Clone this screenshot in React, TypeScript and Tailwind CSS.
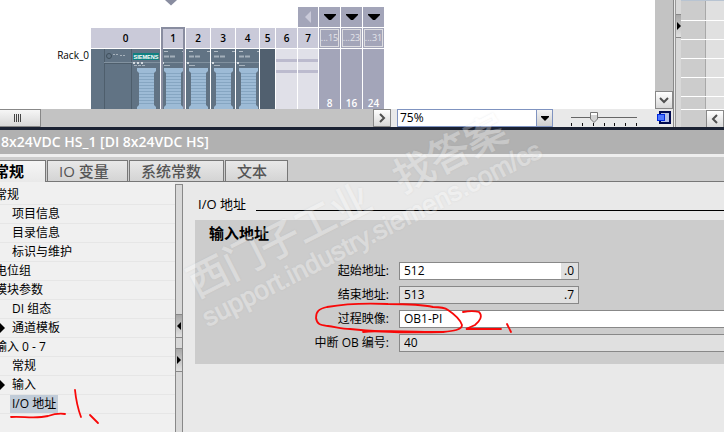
import type { ReactNode } from "react";
import clsx from "clsx";

const treeItems = [
  { label: "常规", level: 0 },
  { label: "项目信息", level: 1 },
  { label: "目录信息", level: 1 },
  { label: "标识与维护", level: 1 },
  { label: "电位组", level: 0 },
  { label: "模块参数", level: 0 },
  { label: "DI 组态", level: 1 },
  { label: "通道模板", level: 1, expandable: true },
  { label: "输入 0 - 7", level: 0 },
  { label: "常规", level: 1 },
  { label: "输入", level: 1, expandable: true },
  { label: "I/O 地址", level: 1, selected: true },
];

const tabs = [
  { label: "IO 变量", width: "w-[81px]" },
  { label: "系统常数", width: "w-[95px]" },
  { label: "文本", width: "w-[63px]" },
];

const moreSlots = [
  { range: "...15", last: "8" },
  { range: "...23", last: "16" },
  { range: "...31", last: "24" },
];

function Connector({ x }: { x: number }) {
  const stripes = [24, 27, 30, 33, 36, 39, 42, 45, 48, 51, 54];
  return (
    <g transform={`translate(${x} 0)`}>
      <path d="M0 19H19V22L17 24V56L19 58V60H0V58L2 56V24L0 22Z" fill="#9dbbd6" />
      {stripes.map((y) => (
        <rect key={y} x="2" y={y} width="15" height="1" fill="#86a6c2" />
      ))}
    </g>
  );
}

function CpuDrawing() {
  return (
    <svg viewBox="0 0 69 60" className="block h-[60px] w-[69px] bg-[#617384]" aria-hidden="true">
      <path d="M13.5 0V60M40.5 0V60" stroke="#4e5e6c" />
      <path d="M13 13.5H69" stroke="#8292a0" />
      <path d="M13 14.5H40" stroke="#4e5e6c" />
      <circle cx="18" cy="7" r="2.5" fill="none" stroke="#3f4f5c" />
      <path d="M22 5.5H28M29 6.5H35" stroke="#a7b2bc" strokeDasharray="2 1" />
      <rect x="42" y="4" width="26" height="7" fill="#118080" />
      <text x="55" y="10" fontSize="5.6" fontWeight="700" fill="#fff" textAnchor="middle" fontFamily="Liberation Sans, sans-serif">
        SIEMENS
      </text>
      <path d="M42 13h2v2h-2zM46 13h2v2h-2zM50 13h2v2h-2z" fill="#d5dbe0" />
      <path d="M43 16.500H54" stroke="#a7b2bc" strokeDasharray="3 1" />
      <Connector x={46} />
    </svg>
  );
}

function ModuleDrawing() {
  return (
    <svg viewBox="0 0 24 60" preserveAspectRatio="xMinYMin slice" className="block h-[60px] w-full bg-[#617384]" aria-hidden="true">
      <path d="M3 2.500H7M21 2.500H24" stroke="#b3bdc6" />
      <path d="M3 7.500H14" stroke="#a3afba" strokeWidth="2" strokeDasharray="5 1" />
      <path d="M0 13.500H24" stroke="#8292a0" />
      <rect x="1" y="13" width="2" height="2" fill="#d5dbe0" />
      <path d="M3 16.500H9" stroke="#a7b2bc" />
      <Connector x={3} />
    </svg>
  );
}

function Slot({ label, width, selected, children }: { label: string; width: string; selected?: boolean; children: ReactNode }) {
  return (
    <div className={clsx("relative shrink-0 pt-[21px]", width)}>
      <div className="flex h-5 items-center justify-center bg-[#cacad9] text-[10px] font-semibold">{label}</div>
      <div className="mt-px h-[60px]">{children}</div>
      {selected && <div className="absolute inset-x-0 top-5 bottom-0 border-2 border-b-0 border-[#898da0]" />}
    </div>
  );
}

function EmptyRail() {
  return (
    <div className="h-full bg-[#e0e0e8] pt-[10px]">
      <div className="h-[3px] bg-[#bcbbce]" />
      <div className="mt-2 h-[3px] bg-[#bcbbce]" />
    </div>
  );
}

function RackView() {
  return (
    <div className="relative flex h-[109px] overflow-hidden bg-white pt-[7px]">
      <svg viewBox="0 0 12 6" className="absolute top-0 left-[165px] h-[6px] w-3" aria-hidden="true">
        <path d="M0 0H12L6 5.500Z" fill="#898da0" />
      </svg>
      <div className="w-[91px] shrink-0 pt-[40px] pr-[2px] text-right text-[10px] leading-4">Rack_0</div>
      <div className="flex gap-px">
        <Slot label="0" width="w-[69px]">
          <CpuDrawing />
        </Slot>
        <Slot label="1" width="w-6" selected>
          <ModuleDrawing />
        </Slot>
        <Slot label="2" width="w-6">
          <ModuleDrawing />
        </Slot>
        <Slot label="3" width="w-6">
          <ModuleDrawing />
        </Slot>
        <Slot label="4" width="w-[23px]">
          <ModuleDrawing />
        </Slot>
        <Slot label="5" width="w-[15px]">
          <div className="h-full bg-[#51606f]" />
        </Slot>
        <Slot label="6" width="w-[21px]">
          <EmptyRail />
        </Slot>
        <div className="relative">
          <Slot label="7" width="w-5">
            <EmptyRail />
          </Slot>
          <button type="button" aria-label="收起" className="absolute inset-x-0 top-0 flex h-5 items-center justify-center bg-[#a3a5b9]">
            <svg viewBox="0 0 6 12" className="h-3 w-[6px]" aria-hidden="true">
              <path d="M6 0V12L0 6Z" fill="#cacad9" />
            </svg>
          </button>
        </div>
        {moreSlots.map((slot) => (
          <div key={slot.last} className="flex w-[21px] flex-col gap-px">
            <button type="button" aria-label={slot.range} className="flex h-5 items-center justify-center bg-[#a3a5b9]">
              <svg viewBox="0 0 12 6" className="h-[6px] w-3" aria-hidden="true">
                <path d="M0 0H12V1L7 6H5L0 1Z" />
              </svg>
            </button>
            <div className="h-5 bg-[#a3a5b9] p-px">
              <div className="flex h-full items-center justify-center border border-[#dcdce0] text-[9px] text-[#e4e4ea]">{slot.range}</div>
            </div>
            <div className="flex h-[60px] items-end justify-center bg-[#a3a5b9] text-[10px] leading-3 font-semibold text-white">{slot.last}</div>
          </div>
        ))}
      </div>
    </div>
  );
}

function ScrollButton({ label, path }: { label: string; path: string }) {
  return (
    <button
      type="button"
      aria-label={label}
      className="flex size-[18px] shrink-0 items-center justify-center border border-[#888] bg-linear-to-b from-white to-[#d8d8d8]"
    >
      <svg viewBox="0 0 10 10" className="size-[10px]" fill="none" stroke="#505050" strokeWidth="2" aria-hidden="true">
        <path d={path} />
      </svg>
    </button>
  );
}

function ZoomBar() {
  return (
    <div className="flex h-[18px] min-w-0 bg-[#e9e9e9]">
      <div className="flex min-w-0 flex-1 justify-between bg-[#c3c3c3]">
        <div className="flex w-[41px] items-center justify-center border border-l-0 border-[#888] bg-linear-to-b from-[#f6f6f6] to-[#d8d8d8] pr-1">
          {[0, 1, 2, 3].map((bar) => (
            <span key={bar} className="mr-px h-2 w-px bg-[#444]" />
          ))}
        </div>
        <ScrollButton label="向右滚动" path="M3 1L7 5L3 9" />
      </div>
      <div className="relative ml-[6px] w-[156px] border border-[#7f93c0] bg-white">
        <select aria-label="缩放" className="block h-4 w-full appearance-none pl-[2px] text-xs leading-4 outline-none">
          <option>75%</option>
        </select>
        <span className="pointer-events-none absolute inset-y-0 right-0 flex w-4 items-center justify-center border-l border-[#7f93c0] bg-linear-to-b from-[#f2f2f2] to-[#cfcfcf]">
          <svg viewBox="0 0 8 5" className="h-[5px] w-2" aria-hidden="true">
            <path d="M0 0H8V1L4 5L0 1Z" />
          </svg>
        </span>
      </div>
      <div className="relative mr-[18px] ml-[18px] w-[66px]">
        <svg viewBox="0 0 66 18" className="block h-[18px] w-[66px]" aria-hidden="true">
          <path d="M0 8.500H66" stroke="#666" />
          <path d="M.5 14V17M11.500 14V17M22.500 14V17M33.500 14V17M43.500 14V17M54.500 14V17M65.500 14V17" stroke="#111" />
          <path d="M19.500 3.500H26.500V10L23 13.500L19.500 10Z" fill="#d4d4d4" stroke="#777" />
          <path d="M20 5H26" stroke="#fff" strokeWidth="2" />
        </svg>
        <input type="range" aria-label="缩放比例" defaultValue={34} className="absolute inset-0 h-full w-full opacity-0" />
      </div>
    </div>
  );
}

function DeviceTable() {
  const rows = ["h-[19px]", "h-[18px]", "h-[18px]", "h-[18px]", "h-[18px]", "h-[18px]"];
  return (
    <div className="flex w-[43px] shrink-0 flex-col">
      <div className="h-px bg-[#b8c4d2]" />
      <div className="flex h-[108px] flex-col gap-px overflow-hidden bg-white">
        {rows.map((height, index) => (
          <div key={index} className={clsx("flex shrink-0", height)}>
            <div className="w-[25px] border-r border-[#a8a8a8] bg-[#cccccc]" />
            <div className="flex-1 bg-[#e0e0e0]" />
          </div>
        ))}
      </div>
      <div className="flex h-[18px] border-t border-white bg-[#cccccc]">
        <div className="w-[25px] shrink-0" />
        <ScrollButton label="向左滚动" path="M7 1L3 5L7 9" />
      </div>
    </div>
  );
}

function SplitterButton({ label, path }: { label: string; path: string }) {
  return (
    <button
      type="button"
      aria-label={label}
      className="flex h-6 w-full shrink-0 items-center justify-center border-y border-[#888] bg-linear-to-b from-[#a8a8a8] to-[#e0e0e0]"
    >
      <svg viewBox="0 0 4 8" className="h-2 w-1" aria-hidden="true">
        <path d={path} />
      </svg>
    </button>
  );
}

function Editor() {
  return (
    <section className="flex h-[127px] bg-[#e9e9e9]">
      <div className="flex min-w-0 flex-1 flex-col">
        <RackView />
        <ZoomBar />
      </div>
      <div className="flex w-[19px] shrink-0 flex-col border-r border-[#888]">
        <div className="flex h-[109px] flex-col justify-end bg-[#c3c3c3]">
          <ScrollButton label="向下滚动" path="M1 3L5 7L9 3" />
        </div>
        <button type="button" aria-label="总览" className="h-[18px]">
          <svg viewBox="0 0 17 18" className="block h-[18px] w-[17px]" aria-hidden="true">
            <rect x="5" y="3" width="10" height="11" fill="#b5c0e6" stroke="#000a50" strokeWidth="2" />
            <rect x="2.500" y="5.500" width="7" height="6" fill="#5078ff" stroke="#0028e0" />
          </svg>
        </button>
      </div>
      <div className="ml-px flex w-[6px] shrink-0 flex-col border-l border-[#999] bg-[#d8d8d8] pt-[14px]">
        <SplitterButton label="展开视图" path="M0 0L4 4L0 8Z" />
      </div>
      <DeviceTable />
    </section>
  );
}

function TreeNav() {
  return (
    <nav className="w-[175px] shrink-0 overflow-hidden bg-[#f0f0f0] pt-1">
      <ul className="-ml-[5px] text-xs">
        {treeItems.map((item, index) => (
          <li key={index} className="flex h-[19px] items-center border-b border-[#e6e6e6]">
            {item.level === 1 && (
              <span className="flex w-[15px] shrink-0 justify-center pr-[1px]">
                {item.expandable && (
                  <svg viewBox="0 0 5 10" className="h-[10px] w-[5px]" aria-hidden="true">
                    <path d="M0 0L5 5L0 10Z" />
                  </svg>
                )}
              </span>
            )}
            <a
              href="#"
              className={clsx(
                "h-[18px] leading-[18px] whitespace-nowrap",
                item.level === 1 && "px-[2px]",
                item.selected && "bg-[#c1ccd8]",
              )}
            >
              {item.label}
            </a>
          </li>
        ))}
      </ul>
    </nav>
  );
}

function Field({ id, label, value, suffix, wide, editable }: { id: string; label: string; value: string; suffix?: string; wide?: boolean; editable?: boolean }) {
  return (
    <div className="flex h-[18px] items-center gap-[10px]">
      <label htmlFor={id} className="w-[194px] shrink-0 text-right">
        {label}:
      </label>
      <div
        className={clsx(
          "flex h-[18px] border border-[#888]",
          wide ? "min-w-0 flex-1 border-r-0" : "w-[180px]",
          editable ? "bg-white" : "bg-[#e0e0e0]",
        )}
      >
        <input id={id} defaultValue={value} readOnly={!editable} className="min-w-0 flex-1 bg-transparent px-1 leading-4 outline-none" />
        {suffix && <span className="w-[17px] bg-[#e0e0e0] pr-1 text-right leading-4">{suffix}</span>}
      </div>
    </div>
  );
}

function AddressForm() {
  return (
    <main className="min-w-0 flex-1 pl-3">
      <div className="flex h-[38px] items-center gap-[10px] pt-[6px]">
        <h2 className="pl-[3px] text-[13px] leading-5">I/O 地址</h2>
        <div className="mt-3 h-px flex-1 bg-black" />
      </div>
      <div className="bg-[#cccccc] pb-3">
        <h3 className="h-[42px] pt-[3px] pl-[14px] text-[15px] leading-5 font-bold">输入地址</h3>
        <div className="flex flex-col gap-[6px] text-xs">
          <Field id="start" label="起始地址" value="512" suffix=".0" editable />
          <Field id="end" label="结束地址" value="513" suffix=".7" />
          <Field id="image" label="过程映像" value="OB1-PI" wide editable />
          <Field id="ob" label="中断 OB 编号" value="40" wide />
        </div>
      </div>
    </main>
  );
}

function Watermark() {
  return (
    <div className="pointer-events-none absolute top-0 left-0 whitespace-nowrap text-white opacity-30 [-webkit-text-stroke:1px_#ffffff] [text-shadow:0_0_2px_#808080]">
      <div className="absolute top-[265px] left-[190px] flex origin-left rotate-[-27deg] gap-[31px] text-[40px] leading-10">
        <span>西门子工业</span>
        <span>找答案</span>
      </div>
      <div className="absolute top-[303px] left-[204px] origin-left rotate-[-27deg] font-['Liberation_Sans',sans-serif] text-[26px] leading-8">
        support.industry.siemens.com/cs
      </div>
    </div>
  );
}

function PenMarks() {
  return (
    <svg
      viewBox="0 0 724 432"
      className="pointer-events-none absolute top-0 left-0 h-[432px] w-[724px]"
      fill="none"
      stroke="#f80808"
      strokeWidth="1.8"
      strokeLinecap="round"
      aria-hidden="true"
    >
      <path d="M448 310C444 307 438 307 433 307C420 304 404 304 388 304C366 303 344 304 327 307C319 309 316 311 316 318C317 325 321 325 328 326C336 327 342 329 350 329C378 332 410 333 443 332C453 331 462 330 462 325C460 319 454 314 448 310" />
      <path d="M363 332C390 330 416 332 443 332" />
      <path d="M463 312C469 311 475 311 479 312C483 316 480 321 475 325L466 329H501" />
      <path d="M507 324L511 332" />
      <path d="M11 417C22 416 35 419 48 416C54 414 59 413 65 414" />
      <path d="M75 390C76 400 78 409 81 417" />
      <path d="M90 415L98 423" />
    </svg>
  );
}

export default function App() {
  return (
    <div className="relative flex min-h-screen flex-col overflow-hidden bg-[#e9e9e9] font-['Open_Sans','Noto_Sans_CJK_SC',sans-serif] text-black">
      <Editor />
      <header className="h-[30px] overflow-hidden border-t-[3px] border-b-[3px] border-t-[#1b2233] border-b-[#eeeeee] bg-[#b1b1b1]">
        <h1 className="pl-px text-sm leading-6 font-semibold whitespace-nowrap text-white">8x24VDC HS_1 [DI 8x24VDC HS]</h1>
      </header>
      <div role="tablist" className="flex h-[25px] bg-[#cccccc] pt-[3px] text-[15px] leading-5">
        <button type="button" role="tab" aria-selected="true" className="flex w-[46px] justify-end border-t border-r border-[#777] bg-linear-to-b from-[#f6f6f6] to-[#e9e9e9] pr-[21px] font-bold whitespace-nowrap">
          常规
        </button>
        <div className="flex flex-1 border-b border-[#777] pl-px">
          {tabs.map((tab) => (
            <button
              key={tab.label}
              type="button"
              role="tab"
              aria-selected="false"
              className={clsx(
                "mr-px border border-b-0 border-[#777] bg-linear-to-b from-[#e8e8e8] to-[#d4d4d4] pl-[11px] text-left font-medium text-[#555]",
                tab.width,
              )}
            >
              {tab.label}
            </button>
          ))}
        </div>
      </div>
      <div className="flex flex-1">
        <TreeNav />
        <div className="mt-[2px] flex w-2 shrink-0 flex-col gap-[10px] border border-b-0 border-[#888] bg-[#d8d8d8] pt-[129px]">
          <SplitterButton label="收起导航" path="M4 0L0 4L4 8Z" />
          <SplitterButton label="展开导航" path="M0 0L4 4L0 8Z" />
        </div>
        <AddressForm />
      </div>
      <Watermark />
      <PenMarks />
    </div>
  );
}
